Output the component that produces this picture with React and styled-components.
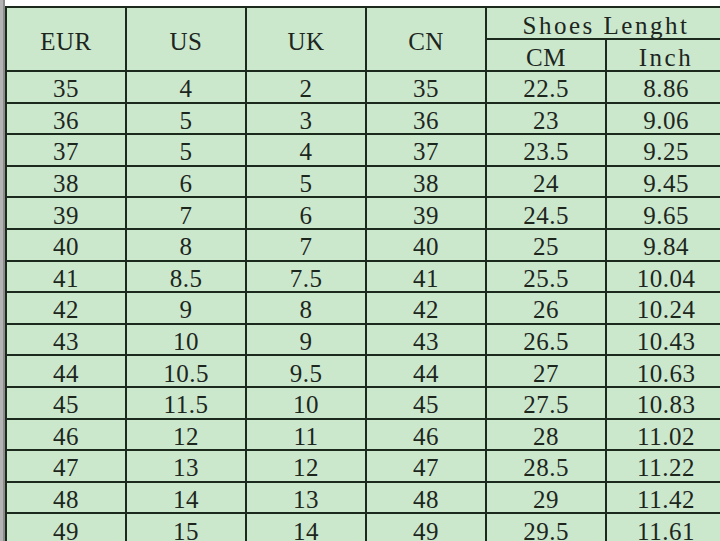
import styled, { createGlobalStyle } from "styled-components";

const GlobalStyle = createGlobalStyle`
  html, body {
    margin: 0;
    padding: 0;
    background: #ffffff;
  }
  body {
    width: 720px;
    height: 541px;
    overflow: hidden;
  }
`;

const Page = styled.div`
  display: flex;
  width: 720px;
  height: 541px;
  overflow: hidden;
  background: #ffffff;
`;

const LeftStrip = styled.div`
  flex: 0 0 5px;
  background: linear-gradient(to right, #b4b4b4 0 3px, #8c8c8c 3px 5px);
`;

const Sheet = styled.div`
  flex: 0 0 auto;
  padding-top: 6px;
`;

const Table = styled.table`
  border-collapse: collapse;
  table-layout: fixed;
  width: 722px;
  background: #cbe8cd;
  font-family: "Liberation Serif", "Times New Roman", serif;
  font-size: 25px;
  letter-spacing: 0.5px;
  color: #1d261d;
`;

const Cell = styled.td`
  border: 2px solid #1c2a1e;
  text-align: center;
  vertical-align: middle;
  padding: 4px 0 0;
  height: ${(p) => p.$h || 25.6}px;
  line-height: 1;
  white-space: nowrap;
  overflow: hidden;
`;

const HeadCell = styled(Cell).attrs({ as: "th" })`
  font-weight: normal;
  letter-spacing: ${(p) => (p.$wide ? "2.5px" : "0.5px")};
`;

const rows = [
  ["35", "4", "2", "35", "22.5", "8.86"],
  ["36", "5", "3", "36", "23", "9.06"],
  ["37", "5", "4", "37", "23.5", "9.25"],
  ["38", "6", "5", "38", "24", "9.45"],
  ["39", "7", "6", "39", "24.5", "9.65"],
  ["40", "8", "7", "40", "25", "9.84"],
  ["41", "8.5", "7.5", "41", "25.5", "10.04"],
  ["42", "9", "8", "42", "26", "10.24"],
  ["43", "10", "9", "43", "26.5", "10.43"],
  ["44", "10.5", "9.5", "44", "27", "10.63"],
  ["45", "11.5", "10", "45", "27.5", "10.83"],
  ["46", "12", "11", "46", "28", "11.02"],
  ["47", "13", "12", "47", "28.5", "11.22"],
  ["48", "14", "13", "48", "29", "11.42"],
  ["49", "15", "14", "49", "29.5", "11.61"],
];

export default function App() {
  return (
    <>
      <GlobalStyle />
      <Page>
        <LeftStrip />
        <Sheet>
          <Table>
            <colgroup>
              {[0, 1, 2, 3, 4, 5].map((i) => (
                <col key={i} style={{ width: 120 }} />
              ))}
            </colgroup>
            <thead>
              <tr>
                <HeadCell rowSpan={2}>EUR</HeadCell>
                <HeadCell rowSpan={2}>US</HeadCell>
                <HeadCell rowSpan={2}>UK</HeadCell>
                <HeadCell rowSpan={2}>CN</HeadCell>
                <HeadCell colSpan={2} $h={26} $wide>
                  Shoes Lenght
                </HeadCell>
              </tr>
              <tr>
                <HeadCell $h={26}>CM</HeadCell>
                <HeadCell $h={26} $wide>
                  Inch
                </HeadCell>
              </tr>
            </thead>
            <tbody>
              {rows.map((r) => (
                <tr key={r[0]}>
                  {r.map((v, i) => (
                    <Cell key={i}>{v}</Cell>
                  ))}
                </tr>
              ))}
            </tbody>
          </Table>
        </Sheet>
      </Page>
    </>
  );
}
